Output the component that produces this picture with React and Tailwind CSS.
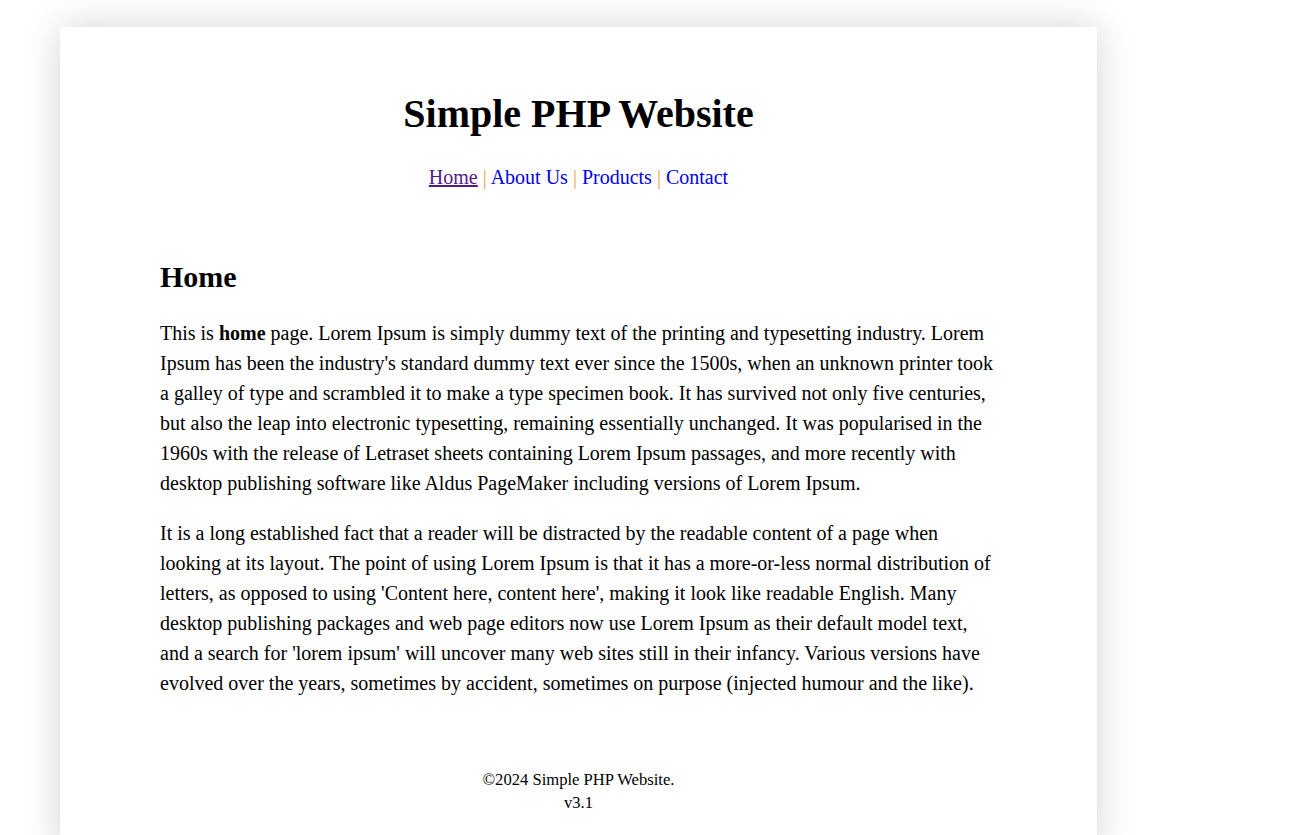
import React from 'react'

const navLinks = [
    { name: 'Home', href: '#', visited: true },
    { name: 'About Us', href: '#' },
    { name: 'Products', href: '#' },
    { name: 'Contact', href: '#' },
]

const App = () => {
    return (
        <div className="min-h-screen bg-white pt-[27px] font-['Liberation_Serif',serif] text-black">
            <div className="ml-[60px] w-[1037px] bg-white px-[100px] pt-[63px] pb-[40px] shadow-[0_0_35px_rgba(0,0,0,0.17)]">
                {/* Header */}
                <h1 className="text-center text-[40px] font-bold leading-[48px]">Simple PHP Website</h1>
                <nav className="mt-[27px] text-center text-[20px] leading-[24px]">
                    {navLinks.map((link, i) => (
                        <React.Fragment key={link.name}>
                            {i > 0 && <span className="text-[#f0a040]"> | </span>}
                            <a
                                href={link.href}
                                className={link.visited ? 'text-[#551a8b] underline' : 'text-[#0000ee]'}
                            >
                                {link.name}
                            </a>
                        </React.Fragment>
                    ))}
                </nav>

                {/* Content */}
                <main className="mt-[70px]">
                    <h2 className="text-[30px] font-bold leading-[36px]">Home</h2>
                    <p className="mt-[23px] text-[20px] leading-[30px]">
                        This is <b>home</b> page. Lorem Ipsum is simply dummy text of the printing and typesetting industry. Lorem Ipsum has been the industry's standard dummy text ever since the 1500s, when an unknown printer took a galley of type and scrambled it to make a type specimen book. It has survived not only five centuries, but also the leap into electronic typesetting, remaining essentially unchanged. It was popularised in the 1960s with the release of Letraset sheets containing Lorem Ipsum passages, and more recently with desktop publishing software like Aldus PageMaker including versions of Lorem Ipsum.
                    </p>
                    <p className="mt-[20px] text-[20px] leading-[30px]">
                        It is a long established fact that a reader will be distracted by the readable content of a page when looking at its layout. The point of using Lorem Ipsum is that it has a more-or-less normal distribution of letters, as opposed to using 'Content here, content here', making it look like readable English. Many desktop publishing packages and web page editors now use Lorem Ipsum as their default model text, and a search for 'lorem ipsum' will uncover many web sites still in their infancy. Various versions have evolved over the years, sometimes by accident, sometimes on purpose (injected humour and the like).
                    </p>
                </main>

                {/* Footer */}
                <footer className="mt-[70px] text-center text-[16.6px] leading-[23px]">
                    <p>©2024 Simple PHP Website.</p>
                    <p>v3.1</p>
                </footer>
            </div>
        </div>
    )
}

export default App
